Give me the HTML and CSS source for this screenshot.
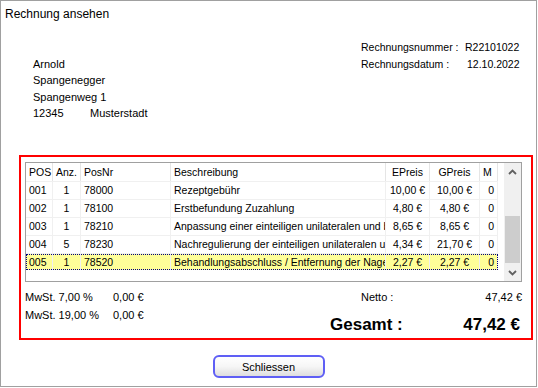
FILE: index.html
```html
<!DOCTYPE html>
<html>
<head>
    <title>Rechnung ansehen</title>
    <link rel="stylesheet" href="styles.css">
</head>
<body>
    <div class="window">
        <div class="title">Rechnung ansehen</div>

        <div class="header">
            <div class="address">
                <div>Arnold</div>
                <div>Spangenegger</div>
                <div>Spangenweg 1</div>
                <div class="city"><span>12345</span><span>Musterstadt</span></div>
            </div>
            <div class="invoice-info">
                <span>Rechnungsnummer :</span><span>R22101022</span>
                <span>Rechnungsdatum :</span><span class="date">12.10.2022</span>
            </div>
        </div>

        <div class="invoice-box">
            <div class="grid">
                <div class="grid-body">
                    <div class="row head">
                        <div class="cell">POS</div>
                        <div class="cell center">Anz.</div>
                        <div class="cell">PosNr</div>
                        <div class="cell">Beschreibung</div>
                        <div class="cell center">EPreis</div>
                        <div class="cell center">GPreis</div>
                        <div class="cell">M</div>
                    </div>
                    <div class="row">
                        <div class="cell">001</div>
                        <div class="cell center">1</div>
                        <div class="cell">78000</div>
                        <div class="cell">Rezeptgebühr</div>
                        <div class="cell center">10,00 €</div>
                        <div class="cell center">10,00 €</div>
                        <div class="cell right">0</div>
                    </div>
                    <div class="row">
                        <div class="cell">002</div>
                        <div class="cell center">1</div>
                        <div class="cell">78100</div>
                        <div class="cell">Erstbefundung Zuzahlung</div>
                        <div class="cell center">4,80 €</div>
                        <div class="cell center">4,80 €</div>
                        <div class="cell right">0</div>
                    </div>
                    <div class="row">
                        <div class="cell">003</div>
                        <div class="cell center">1</div>
                        <div class="cell">78210</div>
                        <div class="cell">Anpassung einer einteiligen unilateralen und bilateralen Spange</div>
                        <div class="cell center">8,65 €</div>
                        <div class="cell center">8,65 €</div>
                        <div class="cell right">0</div>
                    </div>
                    <div class="row">
                        <div class="cell">004</div>
                        <div class="cell center">5</div>
                        <div class="cell">78230</div>
                        <div class="cell">Nachregulierung der einteiligen unilateralen und bilateralen Spange</div>
                        <div class="cell center">4,34 €</div>
                        <div class="cell center">21,70 €</div>
                        <div class="cell right">0</div>
                    </div>
                    <div class="row selected">
                        <div class="cell">005</div>
                        <div class="cell center">1</div>
                        <div class="cell">78520</div>
                        <div class="cell">Behandlungsabschluss / Entfernung der Nagelkorrekturspange</div>
                        <div class="cell center">2,27 €</div>
                        <div class="cell center">2,27 €</div>
                        <div class="cell right">0</div>
                    </div>
                </div>
                <div class="scrollbar">
                    <div class="scroll-btn">
                        <svg width="9" height="6" viewBox="0 0 9 6"><polyline points="1,5 4.5,1.5 8,5" fill="none" stroke="#606060" stroke-width="1.8"/></svg>
                    </div>
                    <div class="track"><div class="thumb"></div></div>
                    <div class="scroll-btn">
                        <svg width="9" height="6" viewBox="0 0 9 6"><polyline points="1,1 4.5,4.5 8,1" fill="none" stroke="#606060" stroke-width="1.8"/></svg>
                    </div>
                </div>
            </div>

            <div class="summary">
                <div class="tax">
                    <span>MwSt. 7,00 %</span><span>0,00 €</span>
                    <span>MwSt. 19,00 %</span><span>0,00 €</span>
                </div>
                <div class="totals">
                    <div class="netto"><span>Netto :</span><span>47,42 €</span></div>
                    <div class="gesamt"><span>Gesamt :</span><span>47,42 €</span></div>
                </div>
            </div>
        </div>

        <div class="footer">
            <button class="close-button">Schliessen</button>
        </div>
    </div>
</body>
</html>
```

FILE: styles.css
```css
body {
    margin: 0;
    font-family: "Liberation Sans", Arial, sans-serif;
    font-size: 11px;
    color: #000;
    background-color: #fff;
}

.window {
    width: 537px;
    height: 387px;
    box-sizing: border-box;
    border: 1px solid #a0a0a0;
}

.title {
    margin-top: 5px;
    padding-left: 4px;
    font-size: 12px;
    line-height: 16px;
}

.header {
    display: flex;
    align-items: flex-start;
    height: 133px;
}

.address {
    width: 200px;
    margin-left: 32px;
    padding-top: 34px;
    line-height: 16.3px;
}

.city {
    display: grid;
    grid-template-columns: 57px auto;
}

.invoice-info {
    margin-left: 128px;
    padding-top: 16.5px;
    display: grid;
    grid-template-columns: 104px auto;
    font-size: 10.5px;
    line-height: 17px;
}

.invoice-info .date {
    padding-left: 2px;
}

.invoice-box {
    margin-left: 18px;
    width: 514px;
    height: 185px;
    box-sizing: border-box;
    border: 2px solid #ff0000;
    padding: 5px 9px 0 4px;
}

.grid {
    display: flex;
    height: 120px;
    box-sizing: border-box;
    border: 1px solid #a0a0a0;
    background-color: #fff;
    font-size: 10.5px;
}

.grid-body {
    flex: 1;
    overflow: hidden;
}

.row {
    display: grid;
    grid-template-columns: 27px 28px 90px 215px 44px 50px 18px;
    width: 472px;
    height: 18px;
    line-height: 17px;
    box-sizing: border-box;
    border-bottom: 1px solid #f0f0f0;
}

.row.head {
    height: 19px;
    line-height: 18px;
}

.row.head .cell {
    border-right-color: #e5e5e5;
}

.row.selected {
    height: 16px;
    line-height: 16px;
    border-bottom: none;
    background-color: #ffff99;
    outline: 1px dotted #000080;
    outline-offset: -1px;
}

.cell {
    min-width: 0;
    padding: 0 3px;
    border-right: 1px solid #f0f0f0;
    overflow: hidden;
    white-space: nowrap;
}

.cell.center {
    padding: 0;
    text-align: center;
}

.cell.right {
    text-align: right;
}

.scrollbar {
    width: 17px;
    display: flex;
    flex-direction: column;
    background-color: #f0f0f0;
}

.scroll-btn {
    height: 17px;
    display: flex;
    align-items: center;
    justify-content: center;
}

.track {
    flex: 1;
}

.thumb {
    margin: 36px 1px 0 1px;
    height: 47px;
    background-color: #cdcdcd;
}

.summary {
    display: flex;
    padding-top: 6px;
}

.tax {
    display: grid;
    grid-template-columns: 88px auto;
    align-content: start;
    line-height: 18px;
}

.totals {
    margin-left: auto;
    width: 192px;
}

.netto {
    display: flex;
    justify-content: space-between;
    padding-left: 31px;
    line-height: 18px;
}

.gesamt {
    display: flex;
    justify-content: space-between;
    margin-top: 7px;
    padding-right: 2px;
    font-size: 17px;
    font-weight: bold;
    line-height: 24px;
}

.footer {
    display: flex;
    justify-content: center;
    padding-top: 15px;
}

.close-button {
    width: 112px;
    height: 23px;
    padding: 0;
    font-family: "Liberation Sans", Arial, sans-serif;
    font-size: 11px;
    color: #000;
    border: 2px solid #5f5ff5;
    border-radius: 6px;
    background: linear-gradient(to bottom, #ffffff 0%, #f6f6f6 50%, #dedede 100%);
    cursor: pointer;
}
```
